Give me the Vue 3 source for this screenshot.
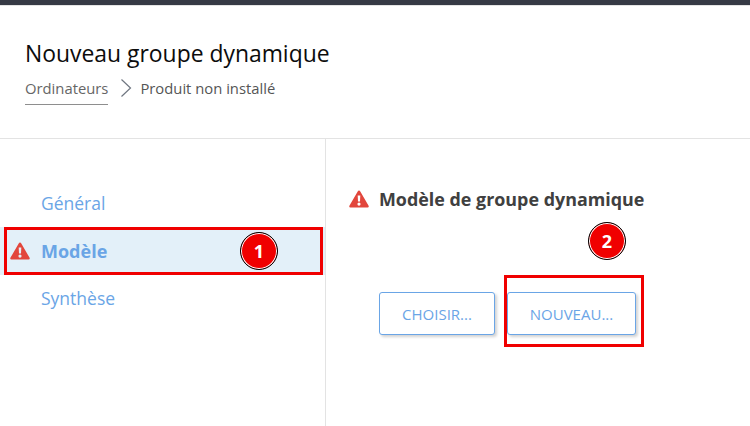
<template>
  <div class="page">
    <div class="topbar"></div>
    <header class="header">
      <h1 class="title">Nouveau groupe dynamique</h1>
      <div class="crumbs">
        <span class="crumb-link">Ordinateurs</span>
        <svg class="chevron" width="12" height="20" viewBox="0 0 12 20">
          <path d="M1.5 1.5 L10.5 10 L1.5 18.5" fill="none" stroke="#6f7680" stroke-width="1.2" />
        </svg>
        <span class="crumb-current">Produit non installé</span>
      </div>
    </header>
    <div class="body">
      <nav class="side">
        <div class="step">Général</div>
        <div class="step active">
          <svg class="warn side-warn" width="20" height="18" viewBox="0 0 20 18">
            <path :d="warnPath" fill="#e2463c" fill-rule="evenodd" />
          </svg>
          Modèle
          <span class="mark mark-1">1</span>
        </div>
        <div class="step">Synthèse</div>
      </nav>
      <main class="content">
        <h2 class="heading">
          <svg class="warn" width="20" height="18" viewBox="0 0 20 18">
            <path :d="warnPath" fill="#e2463c" fill-rule="evenodd" />
          </svg>
          Modèle de groupe dynamique
        </h2>
        <div class="actions">
          <button class="btn btn-choose">CHOISIR...</button>
          <button class="btn btn-new">
            NOUVEAU...
            <span class="outline"></span>
            <span class="mark mark-2">2</span>
          </button>
        </div>
      </main>
    </div>
  </div>
</template>

<script setup>
// triangle with the exclamation mark cut out
const warnPath = 'M10 0.5 Q10.8 0.5 11.3 1.4 L19.6 15.8 Q20.2 17.5 18.6 17.5 L1.4 17.5 Q-0.2 17.5 0.4 15.8 L8.7 1.4 Q9.2 0.5 10 0.5 Z M8.7 5.5 L9 11.5 L11 11.5 L11.3 5.5 Z M10 12.5 A1.6 1.6 0 1 0 10 15.7 A1.6 1.6 0 1 0 10 12.5 Z'
</script>

<style>
html, body {
  margin: 0;
  background: #fff;
}
</style>

<style scoped>
.page {
  width: 750px;
  height: 426px;
  overflow: hidden;
  font-family: "Open Sans", "Noto Sans", sans-serif;
  display: flex;
  flex-direction: column;
}
.topbar {
  height: 5px;
  background: #363a45;
  border-bottom: 1px solid #e4e4e4;
  flex: none;
}
.header {
  height: 133px;
  box-sizing: border-box;
  border-bottom: 1px solid #e3e3e3;
  padding: 33px 0 0 25px;
  flex: none;
}
.title {
  margin: 0;
  font-size: 22.9px;
  font-weight: 400;
  line-height: 30px;
  color: #0c0c0c;
}
.crumbs {
  display: flex;
  align-items: flex-start;
  margin-top: 9px;
  font-size: 14.8px;
  line-height: 20px;
}
.crumb-link {
  color: #666;
  border-bottom: 1px solid #8e8e8e;
  padding-bottom: 6px;
}
.chevron {
  margin: 0 8px 0 12px;
}
.crumb-current {
  color: #555;
  margin-top: 0;
}
.body {
  flex: 1;
  display: flex;
}
.side {
  width: 326px;
  box-sizing: border-box;
  border-right: 1px solid #e3e3e3;
  padding-top: 41px;
  flex: none;
  display: flex;
  flex-direction: column;
}
.step {
  height: 46px;
  line-height: 46px;
  padding-left: 41px;
  font-size: 17.5px;
  color: #6aa5e6;
  position: relative;
}
.step.active {
  height: 48px;
  line-height: 48px;
  margin-top: 1px;
  background: #e3f0f9;
  font-size: 18px;
  font-weight: 700;
}
.step.active::after {
  content: "";
  position: absolute;
  left: 4px;
  right: 2px;
  top: 0;
  bottom: 0;
  border: 3px solid #f00000;
  box-sizing: border-box;
}
.side-warn {
  position: absolute;
  left: 10px;
  top: 15px;
}
.mark {
  position: absolute;
  width: 38px;
  height: 38px;
  box-sizing: border-box;
  border-radius: 50%;
  background: #f00000;
  border: 1px solid #000;
  box-shadow: inset 0 0 0 1px #fff;
  color: #fff;
  font: 700 18px/36px "Open Sans", sans-serif;
  text-align: center;
}
.mark-1 {
  left: 240px;
  top: 5px;
  z-index: 1;
}
.content {
  flex: 1;
  padding: 47px 0 0 23px;
}
.heading {
  margin: 0;
  display: flex;
  align-items: center;
  gap: 10px;
  font-size: 17.9px;
  font-weight: 700;
  line-height: 26px;
  color: #404040;
}
.actions {
  display: flex;
  gap: 12px;
  margin: 80px 0 0 30px;
}
.btn {
  height: 43px;
  box-sizing: border-box;
  background: #fff;
  border: 1px solid #6aa5e6;
  border-radius: 3px;
  box-shadow: 2px 2px 3px rgba(0, 0, 0, 0.18);
  color: #6aa5e6;
  font-family: inherit;
  font-size: 15px;
  padding: 0;
  position: relative;
}
.btn-choose {
  width: 116px;
}
.btn-new {
  width: 129px;
}
.outline {
  position: absolute;
  left: -4px;
  top: -18px;
  width: 140px;
  height: 72px;
  box-sizing: border-box;
  border: 3px solid #f00000;
}
.mark-2 {
  left: 80px;
  top: -71px;
}
</style>
